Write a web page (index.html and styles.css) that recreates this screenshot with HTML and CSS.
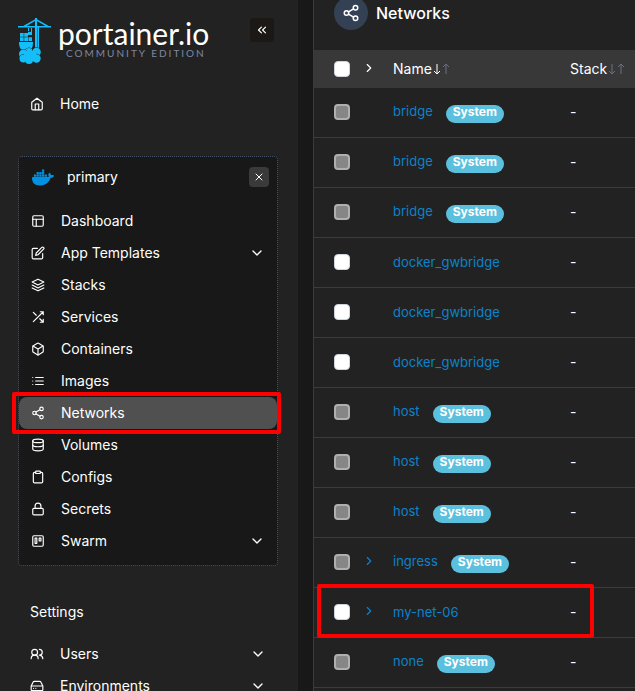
FILE: index.html
```html
<!DOCTYPE html>
<html lang="en">
<head>
<meta charset="utf-8">
<meta name="viewport" content="width=device-width, initial-scale=1">
<title>Networks</title>
<link rel="stylesheet" href="styles.css">
</head>
<body>
<svg class="sprite" aria-hidden="true">
  <symbol id="home" viewBox="0 0 24 24"><path d="M3 9l9-7 9 7v11a2 2 0 0 1-2 2H5a2 2 0 0 1-2-2z"/><path d="M9 22V12h6v10"/></symbol>
  <symbol id="layout" viewBox="0 0 24 24"><rect x="3" y="3" width="18" height="18" rx="2"/><path d="M3 9h18M9 21V9"/></symbol>
  <symbol id="edit" viewBox="0 0 24 24"><path d="M11 4H4a2 2 0 0 0-2 2v14a2 2 0 0 0 2 2h14a2 2 0 0 0 2-2v-7"/><path d="M18.500 2.500a2.120 2.120 0 0 1 3 3L12 15l-4 1 1-4z"/></symbol>
  <symbol id="layers" viewBox="0 0 24 24"><path d="M12 2 2 7l10 5 10-5z"/><path d="m2 17 10 5 10-5M2 12l10 5 10-5"/></symbol>
  <symbol id="shuffle" viewBox="0 0 24 24"><path d="M16 3h5v5M4 20 21 3M21 16v5h-5M15 15l6 6M4 4l5 5"/></symbol>
  <symbol id="box" viewBox="0 0 24 24"><path d="M21 16V8a2 2 0 0 0-1-1.730l-7-4a2 2 0 0 0-2 0l-7 4A2 2 0 0 0 3 8v8a2 2 0 0 0 1 1.730l7 4a2 2 0 0 0 2 0l7-4A2 2 0 0 0 21 16z"/><path d="M3.270 6.960 12 12.010l8.730-5.050M12 22.080V12"/></symbol>
  <symbol id="list" viewBox="0 0 24 24"><path d="M8 6h13M8 12h13M8 18h13M3 6h.01M3 12h.01M3 18h.01"/></symbol>
  <symbol id="share" viewBox="0 0 24 24"><circle cx="18" cy="5" r="3"/><circle cx="6" cy="12" r="3"/><circle cx="18" cy="19" r="3"/><path d="m8.590 13.510 6.830 3.980M15.410 6.510l-6.820 3.980"/></symbol>
  <symbol id="database" viewBox="0 0 24 24"><ellipse cx="12" cy="5" rx="9" ry="3"/><path d="M21 12c0 1.660-4 3-9 3s-9-1.340-9-3"/><path d="M3 5v14c0 1.660 4 3 9 3s9-1.340 9-3V5"/></symbol>
  <symbol id="clipboard" viewBox="0 0 24 24"><path d="M16 4h2a2 2 0 0 1 2 2v14a2 2 0 0 1-2 2H6a2 2 0 0 1-2-2V6a2 2 0 0 1 2-2h2"/><rect x="8" y="2" width="8" height="4" rx="1"/></symbol>
  <symbol id="lock" viewBox="0 0 24 24"><rect x="3" y="11" width="18" height="11" rx="2"/><path d="M7 11V7a5 5 0 0 1 10 0v4"/></symbol>
  <symbol id="trello" viewBox="0 0 24 24"><rect x="3" y="3" width="18" height="18" rx="2"/><path d="M7 7h3v9H7zM14 7h3v5h-3z"/></symbol>
  <symbol id="users" viewBox="0 0 24 24"><path d="M14 20a6 6 0 0 0-12 0"/><circle cx="8" cy="9" r="5"/><path d="M22 20a7 7 0 0 0-5-6M16 4a5 5 0 0 1 0 10"/></symbol>
  <symbol id="drive" viewBox="0 0 24 24"><path d="M22 12H2M5.450 5.110 2 12v6a2 2 0 0 0 2 2h16a2 2 0 0 0 2-2v-6l-3.450-6.890A2 2 0 0 0 16.760 4H7.240a2 2 0 0 0-1.790 1.110zM6 16h.01M10 16h.01"/></symbol>
  <symbol id="down" viewBox="0 0 24 24"><path d="m6 9 6 6 6-6"/></symbol>
  <symbol id="right" viewBox="0 0 24 24"><path d="m9 18 6-6-6-6"/></symbol>
  <symbol id="collapse" viewBox="0 0 24 24"><path d="m11 17-5-5 5-5M18 17l-5-5 5-5"/></symbol>
  <symbol id="close" viewBox="0 0 24 24"><path d="M18 6 6 18M6 6l12 12"/></symbol>
  <symbol id="arrow-down" viewBox="0 0 8 12"><path d="M4 1v10M1 8l3 3 3-3"/></symbol>
  <symbol id="arrow-up" viewBox="0 0 8 12"><path d="M4 11V1M1 4l3-3 3 3"/></symbol>
</svg>

<div class="app">
  <aside class="sidebar">
    <header class="brand-row">
      <a class="brand" href="#">
        <svg class="crane" viewBox="18 18 34 46" aria-hidden="true">
          <path d="M18 26h33v1.500H18z"/>
          <path d="M35 18h2v31h-2zM37.500 27h1.500v22h-1.500z"/>
          <path class="stay" d="M24 26.500 36 19.500l12 7"/>
          <path d="M28 28h1v3h-1zM31 28h1v7h-4v-3h3z"/>
          <path d="M24.200 33H28v3.800h-3.800zM20 33h3.700v3.800H20zM20 37.300h3.700V41H20zM24.200 37.300H28V41h-3.800zM28.500 37.300H32V41h-3.500z"/>
          <path d="M19 42h14c0 3-.500 6-2 7l-3 1h-6c-2-1-3-4-3-8z"/>
          <g class="cloud">
            <path d="M24 51h12v11H24z"/>
            <circle cx="29" cy="52" r="4"/><circle cx="36.500" cy="52" r="4.300"/><circle cx="23.500" cy="54" r="4.500"/>
            <circle cx="23.500" cy="58.500" r="4"/><circle cx="29" cy="60" r="4"/><circle cx="36.500" cy="58.500" r="4.200"/>
          </g>
          <path d="M24 51h12v10H24z"/>
        </svg>
        <span class="wordmark"><span class="brand-name">portainer.io</span><span class="edition">COMMUNITY EDITION</span></span>
      </a>
      <button class="collapse" type="button" aria-label="Collapse menu"><svg class="icon"><use href="#collapse"/></svg></button>
    </header>

    <nav class="nav">
      <a class="item" href="#"><svg class="icon"><use href="#home"/></svg><span>Home</span></a>

      <section class="environment">
        <div class="environment-head">
          <svg class="whale" viewBox="0 3 24 18" aria-hidden="true"><path d="M13.983 11.078h2.119a.186.186 0 00.186-.185V9.006a.186.186 0 00-.186-.186h-2.119a.185.185 0 00-.185.185v1.888c0 .102.083.185.185.185m-2.954-5.43h2.118a.186.186 0 00.186-.186V3.574a.186.186 0 00-.186-.185h-2.118a.185.185 0 00-.185.185v1.888c0 .102.082.185.185.185m0 2.716h2.118a.187.187 0 00.186-.186V6.29a.186.186 0 00-.186-.185h-2.118a.185.185 0 00-.185.185v1.887c0 .102.082.185.185.186m-2.93 0h2.12a.186.186 0 00.184-.186V6.29a.185.185 0 00-.185-.185H8.1a.185.185 0 00-.185.185v1.887c0 .102.083.185.185.186m-2.964 0h2.119a.186.186 0 00.185-.186V6.29a.185.185 0 00-.185-.185H5.136a.186.186 0 00-.186.185v1.887c0 .102.084.185.186.186m5.893 2.715h2.118a.186.186 0 00.186-.185V9.006a.186.186 0 00-.186-.186h-2.118a.185.185 0 00-.185.185v1.888c0 .102.082.185.185.185m-2.93 0h2.12a.185.185 0 00.184-.185V9.006a.185.185 0 00-.184-.186h-2.12a.185.185 0 00-.184.185v1.888c0 .102.083.185.185.185m-2.964 0h2.119a.185.185 0 00.185-.185V9.006a.185.185 0 00-.184-.186h-2.12a.186.186 0 00-.186.186v1.887c0 .102.084.185.186.185m-2.92 0h2.12a.185.185 0 00.184-.185V9.006a.185.185 0 00-.184-.186h-2.12a.185.185 0 00-.184.185v1.888c0 .102.082.185.185.185M23.763 9.89c-.065-.051-.672-.51-1.954-.51-.338.001-.676.03-1.01.087-.248-1.7-1.653-2.53-1.716-2.566l-.344-.199-.226.327c-.284.438-.49.922-.612 1.43-.23.97-.09 1.882.403 2.661-.595.332-1.55.413-1.744.42H.751a.751.751 0 00-.75.748 11.376 11.376 0 00.692 4.062c.545 1.428 1.355 2.48 2.41 3.124 1.18.723 3.1 1.137 5.275 1.137.983.003 1.963-.086 2.93-.266a12.248 12.248 0 003.823-1.389c.98-.567 1.86-1.288 2.61-2.136 1.252-1.418 1.998-2.997 2.553-4.4h.221c1.372 0 2.215-.549 2.68-1.009.309-.293.55-.65.707-1.046l.098-.288Z"/></svg>
          <span>primary</span>
          <button class="close" type="button" aria-label="Close environment"><svg class="icon"><use href="#close"/></svg></button>
        </div>
        <a class="item" href="#"><svg class="icon"><use href="#layout"/></svg><span>Dashboard</span></a>
        <a class="item" href="#"><svg class="icon"><use href="#edit"/></svg><span>App Templates</span><svg class="icon caret"><use href="#down"/></svg></a>
        <a class="item" href="#"><svg class="icon"><use href="#layers"/></svg><span>Stacks</span></a>
        <a class="item" href="#"><svg class="icon"><use href="#shuffle"/></svg><span>Services</span></a>
        <a class="item" href="#"><svg class="icon"><use href="#box"/></svg><span>Containers</span></a>
        <a class="item" href="#"><svg class="icon"><use href="#list"/></svg><span>Images</span></a>
        <a class="item active" href="#" aria-current="page"><svg class="icon"><use href="#share"/></svg><span>Networks</span></a>
        <a class="item" href="#"><svg class="icon"><use href="#database"/></svg><span>Volumes</span></a>
        <a class="item" href="#"><svg class="icon"><use href="#clipboard"/></svg><span>Configs</span></a>
        <a class="item" href="#"><svg class="icon"><use href="#lock"/></svg><span>Secrets</span></a>
        <a class="item" href="#"><svg class="icon"><use href="#trello"/></svg><span>Swarm</span><svg class="icon caret"><use href="#down"/></svg></a>
      </section>

      <h2 class="nav-title">Settings</h2>
      <a class="item" href="#"><svg class="icon"><use href="#users"/></svg><span>Users</span><svg class="icon caret"><use href="#down"/></svg></a>
      <a class="item" href="#"><svg class="icon"><use href="#drive"/></svg><span>Environments</span><svg class="icon caret"><use href="#down"/></svg></a>
    </nav>
  </aside>

  <main class="panel">
    <header class="panel-head">
      <span class="panel-icon"><svg class="icon"><use href="#share"/></svg></span>
      <h1>Networks</h1>
    </header>
    <table class="networks">
      <colgroup><col class="col-check"><col class="col-expand"><col class="col-name"><col></colgroup>
      <thead>
        <tr>
          <th><input type="checkbox" aria-label="Select all"></th>
          <th><button class="expand" type="button" aria-label="Expand all"><svg class="icon"><use href="#right"/></svg></button></th>
          <th><button class="sort" type="button">Name<svg class="arrow on"><use href="#arrow-down"/></svg><svg class="arrow"><use href="#arrow-up"/></svg></button></th>
          <th><button class="sort" type="button">Stack<svg class="arrow"><use href="#arrow-down"/></svg><svg class="arrow"><use href="#arrow-up"/></svg></button></th>
        </tr>
      </thead>
      <tbody>
        <tr><td><input type="checkbox" aria-label="bridge" disabled></td><td></td><td><a href="#">bridge</a><span class="badge">System</span></td><td>-</td></tr>
        <tr><td><input type="checkbox" aria-label="bridge" disabled></td><td></td><td><a href="#">bridge</a><span class="badge">System</span></td><td>-</td></tr>
        <tr><td><input type="checkbox" aria-label="bridge" disabled></td><td></td><td><a href="#">bridge</a><span class="badge">System</span></td><td>-</td></tr>
        <tr><td><input type="checkbox" aria-label="docker_gwbridge"></td><td></td><td><a href="#">docker_gwbridge</a></td><td>-</td></tr>
        <tr><td><input type="checkbox" aria-label="docker_gwbridge"></td><td></td><td><a href="#">docker_gwbridge</a></td><td>-</td></tr>
        <tr><td><input type="checkbox" aria-label="docker_gwbridge"></td><td></td><td><a href="#">docker_gwbridge</a></td><td>-</td></tr>
        <tr><td><input type="checkbox" aria-label="host" disabled></td><td></td><td><a href="#">host</a><span class="badge">System</span></td><td>-</td></tr>
        <tr><td><input type="checkbox" aria-label="host" disabled></td><td></td><td><a href="#">host</a><span class="badge">System</span></td><td>-</td></tr>
        <tr><td><input type="checkbox" aria-label="host" disabled></td><td></td><td><a href="#">host</a><span class="badge">System</span></td><td>-</td></tr>
        <tr><td><input type="checkbox" aria-label="ingress" disabled></td><td><button class="expand" type="button" aria-label="Expand ingress"><svg class="icon"><use href="#right"/></svg></button></td><td><a href="#">ingress</a><span class="badge">System</span></td><td>-</td></tr>
        <tr class="marked"><td><input type="checkbox" aria-label="my-net-06"></td><td><button class="expand" type="button" aria-label="Expand my-net-06"><svg class="icon"><use href="#right"/></svg></button></td><td><a href="#">my-net-06</a></td><td>-</td></tr>
        <tr><td><input type="checkbox" aria-label="none" disabled></td><td></td><td><a href="#">none</a><span class="badge">System</span></td><td>-</td></tr>
      </tbody>
    </table>
  </main>
</div>
</body>
</html>
```
FILE: styles.css
```css
* { box-sizing: border-box; }

body {
  margin: 0;
  background: #181818;
  color: #fff;
  font-family: Inter, "Liberation Sans", sans-serif;
  font-size: 14px;
  line-height: 20px;
}

a { color: inherit; text-decoration: none; }
button { padding: 0; border: 0; background: none; color: inherit; font: inherit; cursor: pointer; }

.sprite { position: absolute; width: 0; height: 0; }

.icon {
  flex: none;
  width: 14px;
  height: 14px;
  fill: none;
  stroke: currentColor;
  stroke-width: 2;
  stroke-linecap: round;
  stroke-linejoin: round;
}

.app { display: flex; gap: 15px; height: 100vh; overflow: hidden; }

/* Sidebar */
.sidebar { flex: none; width: 298px; background: #222; }

.brand-row {
  display: flex;
  justify-content: space-between;
  align-items: flex-start;
  padding: 18px 24px 24px 18px;
}
.brand { display: flex; gap: 6px; }
.crane { width: 34px; height: 46px; fill: #13bef9; }
.crane .stay { fill: none; stroke: #13bef9; stroke-width: 1.500; }
.crane .cloud { stroke: #222; stroke-width: 1; paint-order: stroke; }
.wordmark { display: flex; flex-direction: column; font-family: Lato, sans-serif; }
.brand-name { font-size: 30px; line-height: 30px; }
.edition { padding-left: 8px; color: #8087a0; font-size: 10px; line-height: 10px; letter-spacing: 2px; }

.collapse, .close { display: flex; align-items: center; justify-content: center; border-radius: 4px; }
.collapse { width: 24px; height: 24px; background: #1b1816; }
.close { width: 20px; height: 20px; margin-left: auto; background: #3a3a3a; }
.close .icon { width: 12px; height: 12px; }

.nav { padding: 0 20px 0 18px; }
.item {
  display: flex;
  align-items: center;
  gap: 16px;
  height: 32px;
  padding: 0 12px;
  border-radius: 8px;
}
.caret { width: 16px; height: 16px; margin-left: auto; }

.environment {
  margin: 36px 0;
  padding-bottom: 8px;
  border: 1px dotted #475467;
  border-radius: 4px;
  background: #181818;
}
.environment-head { display: flex; align-items: center; gap: 13px; height: 40px; padding: 0 8px 0 13px; margin-bottom: 8px; }
.whale { width: 22px; height: 17px; fill: #0091e2; }

.item.active { position: relative; background: #505050; }
.item.active::after {
  content: "";
  position: absolute;
  inset: -5px -4px -5px -7px;
  border: 4px solid #f00;
  border-radius: 2px;
}

.nav-title { margin: 0 0 16px; padding: 0 12px; font-size: 14px; font-weight: 400; line-height: 20px; }

/* Main panel */
.panel { flex: 1; min-width: 0; border-left: 1px solid #3b3b3b; background: #222; }
.panel-head { display: flex; align-items: flex-end; gap: 8px; height: 50px; padding: 0 20px 20px; }
.panel-icon {
  display: flex;
  align-items: center;
  justify-content: center;
  width: 34px;
  height: 34px;
  border-radius: 50%;
  background: #344054;
}
.panel-icon .icon { width: 18px; height: 18px; }
.panel-head h1 { margin: 0; font-size: 16px; font-weight: 500; line-height: 34px; }

.networks { width: 100%; table-layout: fixed; border-spacing: 0; text-align: left; }
.col-check { width: 44px; }
.col-expand { width: 35px; }
.col-name { width: 177px; }
.networks th, .networks td { padding: 0; vertical-align: middle; }
.networks th { height: 38px; padding-bottom: 1px; background: #383838; font-weight: 400; }
.networks td { height: 50px; padding-bottom: 2px; border-bottom: 1px solid #3b3b3b; }
.networks th:first-child, .networks td:first-child { padding-left: 20px; }
.networks td a { color: #0b82cc; font-size: 13px; }

.networks input {
  appearance: none;
  display: block;
  width: 16px;
  height: 16px;
  margin: 0;
  border: 1px solid #d0d5dd;
  border-radius: 4px;
  background: #fff;
}
.networks input:disabled { border: 2px solid #b0b0b0; background: #868686; }

.expand { display: flex; padding: 0 0 2px 4px; }
td .expand { color: #0b82cc; }

.sort { display: flex; align-items: center; gap: 1px; }
.arrow { width: 8px; height: 12px; fill: none; stroke: #667085; stroke-width: 1; }
.arrow.on { stroke: #fff; }

.badge {
  display: inline-block;
  margin-left: 13px;
  padding: 0 7px 4px;
  border-radius: 9px;
  background: #5bc0de;
  font-size: 12px;
  font-weight: 700;
  line-height: 14px;
}

.marked { position: relative; }
.marked td:last-child::after {
  content: "";
  position: absolute;
  inset: -4px 41px 0 3px;
  border: 4px solid #f00;
  border-radius: 2px;
}
```
